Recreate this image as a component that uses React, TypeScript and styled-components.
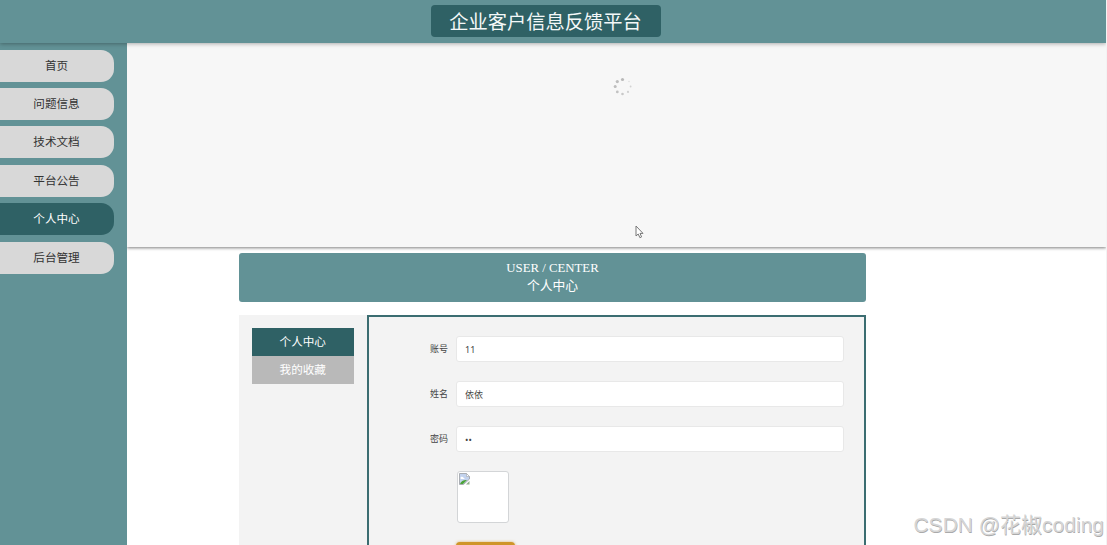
import React from 'react';
import styled, { createGlobalStyle } from 'styled-components';

const GlobalStyle = createGlobalStyle`
  * { box-sizing: border-box; }
  html, body { margin: 0; height: 545px; overflow: hidden; background: #fff; }
  body { font-family: "Noto Sans CJK SC", "Liberation Sans", sans-serif; }
`;

const Page = styled.div`
  position: relative;
  display: flex;
  flex-direction: column;
  width: 1107px;
  height: 545px;
  overflow: hidden;
  background: #fff;
  border-right: 1px solid #f3f3f3;
`;

const Header = styled.header`
  position: relative;
  z-index: 2;
  flex: none;
  display: flex;
  justify-content: center;
  height: 43px;
  padding: 5px 15px 0 0;
  background: #629296;
  box-shadow: 0 1px 4px rgba(0, 0, 0, 0.3);
`;

const Title = styled.h1`
  width: 230px;
  height: 32px;
  margin: 0;
  border-radius: 4px;
  background: #2f6165;
  color: #f4f8f8;
  font-size: 19.25px;
  font-weight: 400;
  line-height: 32px;
  text-align: center;
`;

const Body = styled.div`
  flex: 1;
  display: flex;
  min-height: 0;
`;

const Sidebar = styled.nav`
  position: relative;
  z-index: 1;
  flex: none;
  display: flex;
  flex-direction: column;
  gap: 6.4px;
  width: 127px;
  padding-top: 6.6px;
  background: #629296;
`;

const NavItem = styled.a<{ $active?: boolean }>`
  width: 114px;
  height: 32px;
  padding-right: 1px;
  border-radius: 0 13px 13px 0;
  background: ${(p) => (p.$active ? '#2f6165' : '#d8d8d8')};
  color: ${(p) => (p.$active ? '#fff' : '#333')};
  font-size: 11.6px;
  line-height: 30px;
  text-align: center;
`;

const Main = styled.main`
  flex: 1;
  display: flex;
  flex-direction: column;
  min-width: 0;
`;

const Carousel = styled.section`
  flex: none;
  height: 204px;
  padding: 34px 0 0 486px;
  background: #f7f7f7;
  box-shadow: 0 1px 3px rgba(0, 0, 0, 0.5);
`;

const Spinner = styled.svg`
  display: block;
  width: 20px;
  height: 20px;
`;

const Content = styled.div`
  display: flex;
  flex-direction: column;
  gap: 13px;
  width: 627px;
  margin: 6px 0 0 112px;
`;

const Banner = styled.div`
  height: 49px;
  padding-top: 6px;
  border-radius: 3px;
  background: #629296;
  color: #fff;
  font-family: "Liberation Serif", "Noto Sans CJK SC", serif;
  font-size: 12.8px;
  line-height: 18px;
  text-align: center;
`;

const Columns = styled.div`
  display: flex;
  height: 260px;
`;

const SubMenu = styled.aside`
  width: 128px;
  padding: 13px 13px 0 12.5px;
  background: #f3f3f3;
`;

const SubItem = styled.a<{ $active?: boolean }>`
  display: block;
  height: 28px;
  background: ${(p) => (p.$active ? '#2f6165' : '#b9b9b9')};
  color: #fff;
  font-size: 11.6px;
  line-height: 26px;
  text-align: center;
`;

const Form = styled.form`
  flex: 1;
  display: flex;
  flex-direction: column;
  gap: 19px;
  padding: 19px 20px 0 52px;
  border: 2px solid #3b6d71;
  background: #f3f3f3;
`;

const Field = styled.label`
  display: flex;
  align-items: center;
  height: 26px;
  color: #444;
  font-size: 9px;
`;

const FieldName = styled.span`
  width: 35px;
  padding: 0 8px 1px 0;
  text-align: right;
  white-space: nowrap;
`;

const Input = styled.input`
  flex: 1;
  height: 26px;
  padding: 0 8px;
  border: 1px solid #e8e8e8;
  border-radius: 3px;
  outline: none;
  background: #fff;
  color: #444;
  font: 9px "Noto Sans", "Noto Sans CJK SC", sans-serif;
`;

const Avatar = styled.div`
  width: 52px;
  height: 52px;
  margin-left: 35.5px;
  padding: 1px;
  border: 1px solid #d3d5d7;
  border-radius: 3px;
  background: #fff;
`;

const BrokenImage = styled.svg`
  display: block;
  width: 11px;
  height: 12px;
`;

const Submit = styled.button`
  width: 59px;
  height: 26px;
  margin-left: 35px;
  border: 0;
  border-radius: 4px;
  background: #cf9529;
  box-shadow: 0 0 3px rgba(207, 149, 41, 0.7);
`;

const Cursor = styled.svg`
  position: absolute;
  left: 635px;
  top: 225px;
  width: 9px;
  height: 14px;
`;

const Watermark = styled.div`
  position: absolute;
  right: 2px;
  bottom: 5px;
  color: #d6d6d6;
  font-family: "Liberation Sans", "Noto Sans CJK SC", sans-serif;
  font-size: 21px;
  line-height: 30px;
  white-space: nowrap;
  text-shadow: 0.5px 0.5px 0.5px #aaa;
`;

const navItems = ['首页', '问题信息', '技术文档', '平台公告', '个人中心', '后台管理'];

const spinnerDots = [
  { x: 9.5, y: 2.5, r: 1.6, c: '#b9b9b9' },
  { x: 4.3, y: 4.6, r: 1.6, c: '#bdbdbd' },
  { x: 2.2, y: 9.5, r: 1.5, c: '#bdbdbd' },
  { x: 4.3, y: 14.9, r: 1.4, c: '#c2c2c2' },
  { x: 9.5, y: 17, r: 1.3, c: '#c8c8c8' },
  { x: 15, y: 14.9, r: 1.1, c: '#d0d0d0' },
  { x: 17.6, y: 9.5, r: 0.9, c: '#d2d2d2' },
  { x: 16, y: 4.5, r: 0.7, c: '#d8d8d8' },
];

export default function App() {
  return (
    <Page>
      <GlobalStyle />
      <Header>
        <Title>企业客户信息反馈平台</Title>
      </Header>
      <Body>
        <Sidebar>
          {navItems.map((item) => (
            <NavItem key={item} $active={item === '个人中心'}>{item}</NavItem>
          ))}
        </Sidebar>
        <Main>
          <Carousel>
            <Spinner viewBox="0 0 20 20">
              {spinnerDots.map((d, i) => (
                <circle key={i} cx={d.x} cy={d.y} r={d.r} fill={d.c} />
              ))}
            </Spinner>
          </Carousel>
          <Content>
            <Banner>
              <div>USER / CENTER</div>
              <div>个人中心</div>
            </Banner>
            <Columns>
              <SubMenu>
                <SubItem $active>个人中心</SubItem>
                <SubItem>我的收藏</SubItem>
              </SubMenu>
              <Form>
                <Field>
                  <FieldName>账号</FieldName>
                  <Input defaultValue="11" />
                </Field>
                <Field>
                  <FieldName>姓名</FieldName>
                  <Input defaultValue="依依" />
                </Field>
                <Field>
                  <FieldName>密码</FieldName>
                  <Input type="password" defaultValue="11" />
                </Field>
                <Avatar>
                  <BrokenImage viewBox="0 0 11 12">
                    <path d="M0.5 0.5H7.5L10.5 3.5V6L4.5 11.5H0.5Z" fill="#c3d3ee" stroke="#a9adb3" />
                    <path d="M7.5 0.5V3.5H10.5Z" fill="#fff" stroke="#a9adb3" strokeWidth="0.7" />
                    <path d="M1.5 5.2C1.5 3.5 4 3.3 4.5 4.8C5.8 4.8 5.8 6 5 6H2Z" fill="#fff" />
                    <path d="M1 11C2 8 5 6.5 8 7L4 11Z" fill="#4da338" />
                    <path d="M7 11.5L10.5 8V11.5Z" fill="#8faf8b" />
                  </BrokenImage>
                </Avatar>
                <Submit type="button" />
              </Form>
            </Columns>
          </Content>
        </Main>
      </Body>
      <Cursor viewBox="0 0 9 14">
        <path d="M1 1V11L3.2 9L4.9 12.7L6.6 11.9L5 8.4H8Z" fill="#fff" stroke="#777" strokeWidth="1" />
      </Cursor>
      <Watermark>CSDN @花椒coding</Watermark>
    </Page>
  );
}
